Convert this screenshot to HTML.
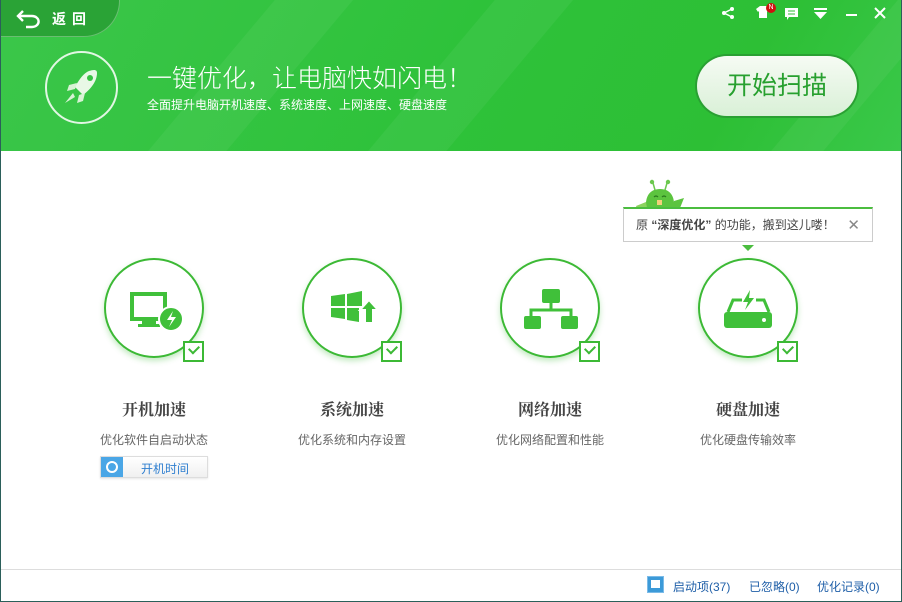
<!DOCTYPE html>
<html><head><meta charset="utf-8"><style>
*{margin:0;padding:0;box-sizing:border-box}
body{width:902px;height:602px;overflow:hidden;font-family:"Liberation Sans","Noto Sans CJK SC",sans-serif;background:#fff;position:relative}
.frame{position:absolute;inset:0;border:1px solid #2b5f5a;border-top:none}
.hdr{position:absolute;left:0;top:0;width:902px;height:151px;background:linear-gradient(120deg,#3bc64a 0%,#2ec23a 50%,#2dbf35 80%,#3ac84a 100%);overflow:hidden}
.stripe{position:absolute;top:-100px;width:60px;height:400px;background:rgba(255,255,255,.05);transform:rotate(40deg)}
.back{position:absolute;left:0;top:0;width:120px;height:37px;background:#2aa336;border-bottom-right-radius:36px;border-right:1px solid rgba(255,255,255,.3);border-bottom:1px solid rgba(255,255,255,.3)}
.back span{position:absolute;left:52px;top:9px;color:#fff;font-size:14px;letter-spacing:6px;font-weight:bold}
.t1{position:absolute;left:147px;top:59px;color:#fff;font-size:25px;font-weight:300;font-family:"Noto Sans CJK SC",sans-serif}
.t2{position:absolute;left:147px;top:96px;color:#fff;font-size:12px}
.rc{position:absolute;left:45px;top:51px;width:73px;height:73px;border:2px solid rgba(255,255,255,.85);border-radius:50%}
.btn{position:absolute;left:697px;top:56px;width:160px;height:60px;border-radius:30px;background:linear-gradient(#f6fbf4,#d9f0d7);box-shadow:0 0 0 2px #2aa033;color:#27a02f;font-size:25px;text-align:center;line-height:60px}
.tool{position:absolute;top:4px;color:#fff;font-size:14px}
.card{position:absolute;top:258px;width:100px;height:100px;border:2px solid #3cb935;border-radius:50%;box-shadow:0 3px 6px rgba(60,185,53,.3)}
.chk{position:absolute;left:77px;top:81px;width:21px;height:21px;border:2px solid #3cb935;background:#fff}
.chk:after{content:"";position:absolute;left:4px;top:2px;width:8px;height:5px;border-left:2px solid #3cb935;border-bottom:2px solid #3cb935;transform:rotate(-45deg)}
.tt{position:absolute;top:397px;width:200px;text-align:center;font-size:16px;font-weight:bold;color:#444;font-family:"Noto Serif CJK SC",serif}
.sub{position:absolute;top:431px;width:200px;text-align:center;font-size:12px;color:#666}
.tip{position:absolute;left:623px;top:207px;width:250px;height:35px;border:1px solid #ccc;border-top:2px solid #4bbd3f;background:#fff;font-size:12px;color:#444;line-height:33px;padding-left:12px}
.foot{position:absolute;left:1px;right:1px;top:569px;border-top:1px solid #ddd}
.fl{position:absolute;top:578px;font-size:12px;color:#1f5fa8}
</style></head><body>
<div class="hdr">
<div class="stripe" style="left:200px"></div><div class="stripe" style="left:420px"></div><div class="stripe" style="left:820px;width:40px"></div>
<div class="back"><svg style="position:absolute;left:16px;top:9px" width="26" height="20" viewBox="0 0 26 20"><path d="M7 2 L2 7 L7 12 M2 7 H16 a6 5 0 0 1 0 11 H10" stroke="#fff" stroke-width="2.4" fill="none"/></svg><span>返回</span></div>
<div class="rc"><svg width="69" height="69" viewBox="0 0 69 69"><path d="M42 18 C48 16 50 17 50 20 C50 28 44 36 36 42 L28 34 C33 25 37 20 42 18Z" fill="#e8f8e6"/><circle cx="43" cy="25" r="3" fill="#39c245"/><path d="M30 30 L22 32 L20 38 L28 36Z M38 40 L36 48 L30 50 L32 42Z M26 40 L18 50 L28 44Z" fill="#d8f2d5"/></svg></div>
<div class="t1">一键优化，让电脑快如闪电！</div>
<div class="t2">全面提升电脑开机速度、系统速度、上网速度、硬盘速度</div>
<div class="btn">开始扫描</div>
<svg style="position:absolute;left:722px;top:7px" width="12" height="12"><circle cx="10" cy="2" r="2" fill="#fff"/><circle cx="2" cy="6" r="2" fill="#fff"/><circle cx="10" cy="10" r="2" fill="#fff"/><path d="M10 2L2 6L10 10" stroke="#fff" stroke-width="1.5" fill="none"/></svg>
<svg class="tool" style="left:756px;top:6px" width="14" height="12"><path d="M0 3 L4 0 H10 L14 3 L12 6 L11 5 V12 H3 V5 L2 6Z" fill="#fff"/></svg>
<div style="position:absolute;left:766px;top:3px;width:10px;height:10px;border-radius:50%;background:#d01010;color:#fff;font-size:7px;text-align:center;line-height:10px">N</div>
<svg class="tool" style="left:785px;top:8px" width="13" height="12"><path d="M0 0H13V9H4L2 12V9H0Z" fill="#fff"/><path d="M3 3H10M3 6H10" stroke="#2dbf35"/></svg>
<svg class="tool" style="left:814px;top:8px" width="13" height="11"><rect width="13" height="2" fill="#fff"/><path d="M0 4H13L6.5 11Z" fill="#fff"/></svg>
<div style="position:absolute;left:846px;top:14px;width:11px;height:2px;background:#fff"></div>
<svg class="tool" style="left:874px;top:7px" width="12" height="12"><path d="M1 1L11 11M11 1L1 11" stroke="#fff" stroke-width="2"/></svg>
</div>

<svg style="position:absolute;left:634px;top:178px" width="52" height="34" viewBox="0 0 52 34"><circle cx="18" cy="4" r="2.2" fill="#6cc84e"/><circle cx="34" cy="4" r="2.2" fill="#6cc84e"/><path d="M19 5L21 12M33 5L31 12" stroke="#6cc84e" stroke-width="1.5"/><path d="M12 30 C11 18 16 11 26 11 C36 11 41 18 40 30Z" fill="#5cc43f"/><path d="M20 19 q2 -2 4 0 M28 19 q2 -2 4 0" stroke="#2a7a1e" stroke-width="1.2" fill="none"/><rect x="23" y="22" width="5" height="5" fill="#f3d07a"/><path d="M12 24 L2 28 L3 31 L13 30Z" fill="#8bd35e"/><path d="M40 23 L50 20 L46 30 L40 30Z" fill="#5cc43f"/></svg>
<div class="tip">原 <b>“深度优化”</b> 的功能，搬到这儿喽！<span style="position:absolute;right:12px;color:#888;font-size:15px">✕</span></div>
<div style="position:absolute;left:742px;top:245px;border:6px solid transparent;border-top:6px solid #4bbd3f"></div>

<div class="card" style="left:104px"><svg width="96" height="96" viewBox="0 0 96 96"><rect x="26" y="34" width="33" height="25" fill="none" stroke="#40c03a" stroke-width="4"/><rect x="36" y="61" width="14" height="3" fill="#40c03a"/><rect x="32" y="64" width="22" height="3" fill="#40c03a"/><circle cx="65" cy="59" r="12" fill="#40c03a" stroke="#fff" stroke-width="2"/><path d="M67 51 L61 60 H66 L63 67 L70 57 H65Z" fill="#fff"/></svg><div class="chk"></div></div>
<div class="card" style="left:302px"><svg width="96" height="96" viewBox="0 0 96 96"><path d="M27 36 L41 34 V46 H27Z M43 34 L58 31 V46 H43Z M27 48 H41 V59 L27 57Z M43 48 H55 V62 L43 60Z" fill="#40c03a"/><path d="M65 40 L74 50 H69 V63 H61 V50 H56Z" fill="#40c03a" stroke="#fff" stroke-width="2"/></svg><div class="chk"></div></div>
<div class="card" style="left:500px"><svg width="96" height="96" viewBox="0 0 96 96"><rect x="40" y="29" width="18" height="14" rx="2" fill="#40c03a"/><path d="M49 43V50M29 58V50H69V58" stroke="#40c03a" stroke-width="3" fill="none"/><rect x="22" y="56" width="17" height="13" rx="2" fill="#40c03a"/><rect x="59" y="56" width="17" height="13" rx="2" fill="#40c03a"/></svg><div class="chk"></div></div>
<div class="card" style="left:698px"><svg width="96" height="96" viewBox="0 0 96 96"><path d="M28 52 L33 40 H42 M56 40 H64 L69 52" stroke="#40c03a" stroke-width="3" fill="none"/><rect x="24" y="52" width="48" height="16" rx="3" fill="#40c03a"/><circle cx="64" cy="60" r="2" fill="#fff"/><path d="M50 30 L43 42 H48 L45 50 L54 38 H49Z" fill="#40c03a"/></svg><div class="chk"></div></div>

<div class="tt" style="left:54px">开机加速</div><div class="sub" style="left:54px">优化软件自启动状态</div>
<div class="tt" style="left:252px">系统加速</div><div class="sub" style="left:252px">优化系统和内存设置</div>
<div class="tt" style="left:450px">网络加速</div><div class="sub" style="left:450px">优化网络配置和性能</div>
<div class="tt" style="left:648px">硬盘加速</div><div class="sub" style="left:648px">优化硬盘传输效率</div>

<div style="position:absolute;left:100px;top:456px;width:108px;height:22px;border:1px solid #ddd;background:linear-gradient(#fff,#f0f0f0);box-shadow:0 1px 2px rgba(0,0,0,.1)">
<div style="position:absolute;left:0;top:0;width:22px;height:20px;background:#4aa6e6"><div style="position:absolute;left:5px;top:4px;width:12px;height:12px;border:2px solid #fff;border-radius:50%"></div></div>
<span style="position:absolute;left:40px;top:3px;font-size:12px;color:#2f7fd0">开机时间</span></div>

<div class="foot"></div>
<div style="position:absolute;left:647px;top:576px;width:17px;height:17px;background:#3c9ad8;border:1px solid #7bbbe8"><div style="position:absolute;left:3px;top:3px;width:9px;height:8px;background:#fff"></div></div>
<div class="fl" style="left:673px">启动项(37)</div>
<div class="fl" style="left:749px">已忽略(0)</div>
<div class="fl" style="left:817px">优化记录(0)</div>
<div class="frame"></div>
</body></html>
